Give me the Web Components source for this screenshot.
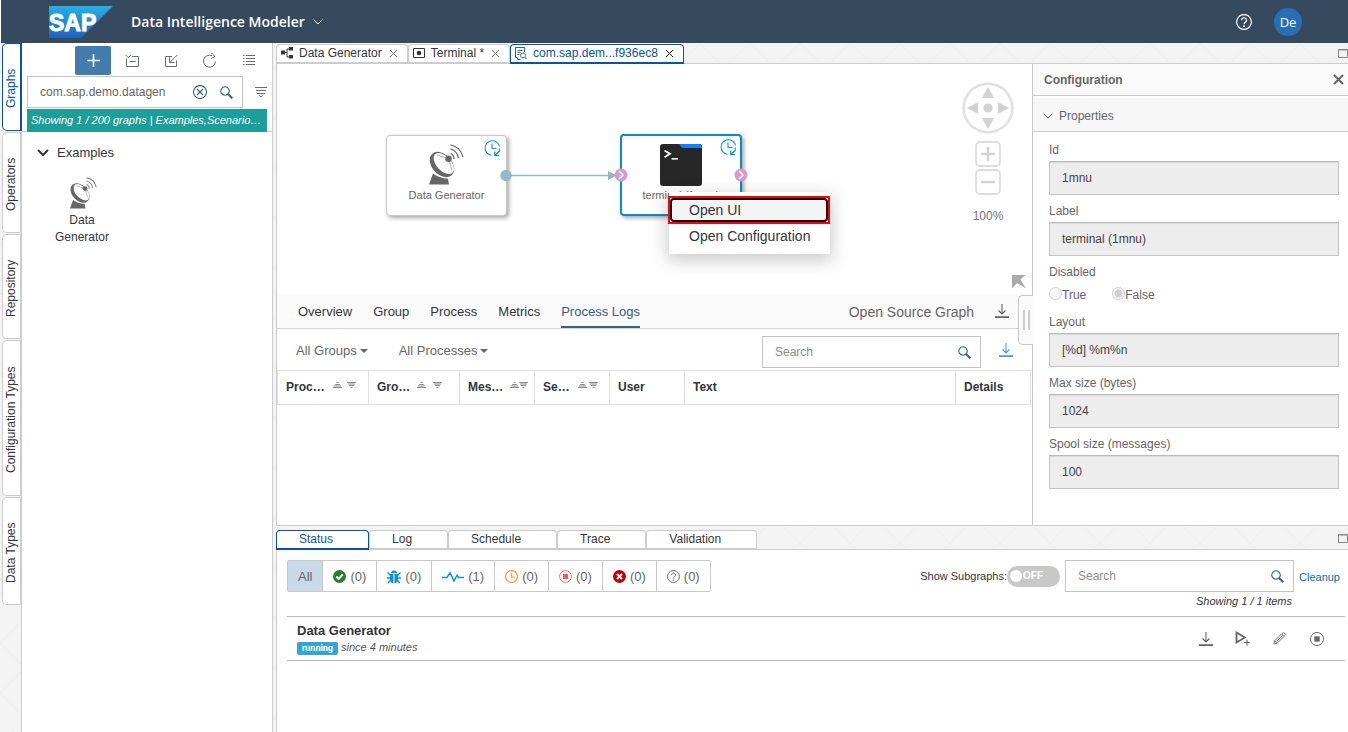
<!DOCTYPE html>
<html lang="en">
<head>
<meta charset="utf-8">
<meta name="viewport" content="width=device-width, initial-scale=1">
<title>Data Intelligence Modeler</title>
<style>
  html, body { height: 100%; margin: 0; }
  body { font: 12px/16px "Liberation Sans", Arial, sans-serif; color: #32363a; background: #fff; }
</style>
</head>
<body>
<modeler-app></modeler-app>

<script>
const BASE = `
  *, *::before, *::after { box-sizing: border-box; }
  :host { display: block; box-sizing: border-box; }
  :host([hidden]) { display: none; }
  button { font: inherit; color: inherit; background: none; border: 0; padding: 0; margin: 0; cursor: pointer;
           display: inline-flex; align-items: center; justify-content: center; }
  input, select { font: inherit; color: inherit; margin: 0; }
`;

/* Registers an element whose shadow root is cloned from one template. */
function define(tag, css, html, ready) {
  const template = document.createElement('template');
  template.innerHTML = `<style>${BASE}${css}</style>${html}`;
  customElements.define(tag, class extends HTMLElement {
    constructor() {
      super();
      this.attachShadow({ mode: 'open' }).append(template.content.cloneNode(true));
    }
    connectedCallback() { if (ready) ready.call(this, this.shadowRoot); }
  });
}

/* ---------- icons: [width, height, markup] ---------- */
const line = (d, w = 1) => `<path d="${d}" fill="none" stroke="currentColor" stroke-width="${w}"/>`;
const ICONS = {
  chevron: [10, 6, line('M.5 .5 5 5 9.500 .5', 1)],
  chevronBold: [12, 8, line('M1 1 6 6 11 1', 2)],
  help: [16, 16, line('M8 .7a7.300 7.300 0 1 0 .01 0zM5.600 6.200a2.400 2.400 0 1 1 3.700 2C8.400 8.800 8 9.200 8 10.200', 1.2) + '<circle cx="8" cy="12.200" r=".9" fill="currentColor"/>'],
  plus: [13, 13, line('M6.500 0V13M0 6.500H13', 1.6)],
  collapse: [14, 14, line('M7 2.500H13.500V12.500H1.500V4.500M4.500 7.500H10.500M.5 .8 3.500 3.800 6 .8', 1)],
  importBox: [14, 14, line('M8 2.500H1.500V12.500H12.500V6.500M13.500 .8 6 8.300M5.500 3.500V8.500H10.500', 1)],
  refresh: [14, 15, line('M12.500 8.500A6 6 0 1 1 9 2.700M8.500 0 12 3.500 8 5.500', 1)],
  list: [12, 13, line('M3 1.500H12M3 4.500H12M3 7.500H12M3 10.500H12M0 1.500H1.500M0 4.500H1.500M0 7.500H1.500M0 10.500H1.500', 1)],
  clear: [14, 14, line('M7 .6a6.400 6.400 0 1 0 .01 0zM4 4 10 10M10 4 4 10', 1.1)],
  search: [13, 13, line('M5 .8a4.200 4.200 0 1 0 .01 0z', 1.1) + line('M8.200 8.200 12.300 12.300', 2)],
  filter: [12, 12, line('M0 1.500H12M1 4.500H11M2 7.500H10M4.200 9.200 6 11 7.800 9.200', 1)],
  dish: [35, 41, '<g fill="#666"><path d="M4 29.500Q10 34 19 34.800L20 40.500H0Z"/><ellipse cx="13" cy="20.500" rx="14.500" ry="10" transform="rotate(47 13 20.500)"/></g><ellipse cx="14.800" cy="19.500" rx="12.700" ry="7.300" transform="rotate(47 14.800 19.500)" fill="#fff"/><path d="M8 11 19 14.500 23 26" fill="none" stroke="#777" stroke-width=".6"/><circle cx="19.500" cy="14.800" r="3.200" fill="#666"/><path d="M22 9.300A7 7 0 0 1 25 15M21.500 4.800A12 12 0 0 1 29.500 14M21.500 .8A16 16 0 0 1 34 13" fill="none" stroke="#777" stroke-width="1.300"/>'],
  terminal: [42, 42, '<rect width="42" height="42" rx="3" fill="#272727"/><path d="M19 0H39a3 3 0 0 1 3 3V4H24Q21 4 20.500 2Q20 0 19 0Z" fill="#0a84ff"/><path d="M4.500 6.500 10 9.800 4.500 13.200" fill="none" stroke="#fff" stroke-width="1.800"/><path d="M11.500 14.800H18" stroke="#fff" stroke-width="1.600"/>'],
  clockNode: [17, 17, line('M15.500 6.500A7.300 7.300 0 1 0 7.500 15.300M8 3.500V8.500H12.500M15.500 8.500 15 10', 1.1) + line('M16 10.500 11 15.500M10.800 11.500V15.700H15', 1.3)],
  graph: [12, 12, '<path d="M0 3.500H4V7.500H0zM8 0H12V3.500H8zM8 8H12V11.500H8z" fill="currentColor"/>' + line('M4 5.500H6M8 2H6V10H8', 1)],
  terminalTab: [12, 10, line('M.5 .5H11.500V9.500H.5z', 1) + '<circle cx="6" cy="5" r="2.300" fill="currentColor"/>'],
  docSearch: [12, 13, line('M5.500 12.500H2.500V10.500M.5 10.500V.5H9.500V5M.5 10.500H2.500M2.500 3.500H7.500M2.500 5.500H5.500M2.500 7.500H4.500M8 6a2.400 2.400 0 1 0 .01 0zM9.700 10 11.700 12.200', .9)],
  close: [9, 9, line('M1 1 8 8M8 1 1 8', 1)],
  closeBold: [11, 11, line('M1 1 10 10M10 1 1 10', 2)],
  square: [10, 9, line('M.5 .5H9.500V8.500H.5zM0 1H10', 1)],
  download: [14, 14, line('M7 0V10M3.500 6.500 7 10 10.500 6.500', 1.1) + '<path d="M0 12.200H14V14H0z" fill="currentColor"/>'],
  caret: [8, 4, '<path d="M0 0H8L4 4z" fill="currentColor"/>'],
  sortUp: [9, 6, line('M3.500 .5H5.500M2.200 2.500H6.800M1 4H8M0 5.500H9', 1)],
  sortDown: [9, 6, line('M0 .5H9M1 2H8M2 3.500H7M3.500 5.500H5.500', 1)],
  wheel: [52, 52, '<circle cx="26" cy="26" r="24.300" fill="none" stroke="#e0e0e0" stroke-width="2.600"/><g fill="#d2d2d2"><circle cx="26" cy="26" r="4.600"/><path d="M26 5 32 16H20zM26 47 32 36H20zM5 26 16 20V32zM47 26 36 20V32z"/></g>'],
  zoomIn: [26, 26, '<rect x="1" y="1" width="24" height="24" rx="4" fill="#fff" stroke="#ddd" stroke-width="1.800"/><path d="M13 6V20M6 13H20" stroke="#d2d2d2" stroke-width="2.400"/>'],
  zoomOut: [26, 26, '<rect x="1" y="1" width="24" height="24" rx="4" fill="#fff" stroke="#ddd" stroke-width="1.800"/><path d="M6 13H20" stroke="#d2d2d2" stroke-width="2.400"/>'],
  corner: [14, 14, '<path d="M0 0H13.500L8.500 4.500 14 13.500 5 8 0 13.500z" fill="#aaa"/>'],
  check: [13, 13, '<circle cx="6.500" cy="6.500" r="6.500" fill="#2b7d2b"/><path d="M3.300 6.500 5.700 9 9.700 4.300" fill="none" stroke="#fff" stroke-width="2"/>'],
  bug: [14, 14, '<g fill="#0a94d6"><path d="M4 3.200a3 2.800 0 0 1 6 0zM3 4H6.500V13.500Q3 12.500 3 9zM7.500 4H11V9Q11 12.500 7.500 13.500z"/></g><path d="M.5 2.500 3.500 5.500M13.500 2.500 10.500 5.500M0 8H4M14 8H10M1 13 4 10M13 13 10 10" stroke="#0a94d6" stroke-width="1.400" fill="none"/>'],
  pulse: [22, 10, '<path d="M0 5.500H5L8 .8 12 9 15 3.500 16.500 5.500H22" fill="none" stroke="#0a94d6" stroke-width="1.500"/>'],
  clock: [13, 13, '<path d="M6.500 .6a5.900 5.900 0 1 0 .01 0zM6.500 3V7H10" fill="none" stroke="#e9a13b" stroke-width="1.200"/>'],
  stopRed: [13, 13, '<circle cx="6.500" cy="6.500" r="5.900" fill="none" stroke="#ff6a6a"/><rect x="4" y="4" width="5" height="5" fill="#ff5555"/>'],
  error: [13, 13, '<circle cx="6.500" cy="6.500" r="6.500" fill="#b00"/><path d="M4 4 9 9M9 4 4 9" stroke="#fff" stroke-width="2"/>'],
  playAdd: [15, 15, line('M1.500 1.500V11.500L9.800 6.500z', 1.8) + line('M9 11.500H15M12 8.500V14.500', 1.1)],
  pencil: [13, 13, line('M1 12 1.800 8.800 9 1.500Q10.500 0 11.800 1.200T11.500 4L4.200 11.200zM2 8.800 4.200 11M8.500 2 11 4.500M3.800 9.200 9.800 3.300', .9)],
  stop: [14, 14, line('M7 .5a6.500 6.500 0 1 0 .01 0z', 1) + '<rect x="4.300" y="4.300" width="5.400" height="5.400" fill="currentColor"/>'],
};
customElements.define('di-icon', class extends HTMLElement {
  constructor() { super(); this.attachShadow({ mode: 'open' }); }
  connectedCallback() {
    const [w, h, body] = ICONS[this.getAttribute('name')];
    const width = +(this.getAttribute('width') || w);
    this.shadowRoot.innerHTML = `<style>:host{display:inline-flex;flex:none}svg{display:block}</style>
      <svg width="${width}" height="${Math.round(h * width / w)}" viewBox="0 0 ${w} ${h}" aria-hidden="true">${body}</svg>`;
  }
});

/* ---------- search box ---------- */
define('search-box', `
  form { display: flex; align-items: center; height: 32px; margin: 0; border: 1px solid #c4c4c4; background: #fff; padding: 0 9px 0 12px; }
  input { flex: 1; min-width: 0; border: 0; outline: 0; padding: 0; background: none; height: 28px; color: #666; }
  input::placeholder { color: #8f8f8f; opacity: 1; }
  button { width: 26px; height: 28px; flex: none; color: #346187; }
  button:last-child { margin-right: -6px; }
`, `<form role="search"><input type="text" placeholder="Search" aria-label="Search">
    <button type="button" class="clear" aria-label="Clear"><di-icon name="clear"></di-icon></button>
    <button type="button" aria-label="Search"><di-icon name="search"></di-icon></button></form>`,
function (root) {
  const input = root.querySelector('input'), clear = root.querySelector('.clear');
  input.value = this.getAttribute('value') || '';
  if (!input.value) clear.remove();
  clear.addEventListener('click', () => { input.value = ''; });
});

/* ---------- shell header ---------- */
define('shell-header', `
  :host { background: #354a5f; color: #fff; margin-left: 1px; }
  header { display: flex; align-items: center; height: 43px; padding: 0 46px 0 48px; }
  .logo { display: block; flex: none; margin-right: 18px; }
  .title { font: 600 14px/20px "Open Sans", "Noto Sans", sans-serif; gap: 8px; margin: 0; }
  .spacer { flex: 1; }
  .avatar { width: 28px; height: 28px; border-radius: 50%; background: #286eb4; font: 13px/18px "Open Sans", sans-serif; margin-left: 22px; }
`, `<header>
  <svg class="logo" width="64" height="32" viewBox="0 0 64 32" role="img" aria-label="SAP logo">
    <defs><linearGradient id="g" x1="0" y1="0" x2="0" y2="1"><stop offset="0" stop-color="#27b0e6"/><stop offset="1" stop-color="#1d62ba"/></linearGradient></defs>
    <path d="M0 0H64L32 32H0z" fill="url(#g)"/>
    <text x="0" y="25" font-family="Liberation Sans" font-size="23" font-weight="700" fill="#fff" stroke="#fff" stroke-width="1">SAP</text>
  </svg>
  <button class="title">Data Intelligence Modeler <di-icon name="chevron"></di-icon></button>
  <span class="spacer"></span>
  <button aria-label="Help"><di-icon name="help"></di-icon></button>
  <button class="avatar" aria-label="User menu">De</button>
</header>`);

/* ---------- vertical rail ---------- */
define('rail-tab', `
  :host { padding-left: 2px; }
  button { writing-mode: vertical-rl; transform: rotate(180deg); width: 20px; padding: 20px 0 23px 2px;
    border: 1px solid #ccc; border-left: 2px solid #ccc; border-radius: 0 5px 5px 0; background: #fff; line-height: 16px; height: var(--tab-height, auto); }
  :host([selected]) button { border-color: #0854a0; color: #0854a0; }
`, `<button role="tab"><slot></slot></button>`);

define('side-rail', `
  :host { border-right: 1px solid #ccc; }
  nav { display: flex; flex-direction: column; gap: 1px; width: 21px; }
`, `<nav role="tablist" aria-label="Explorer">
  <rail-tab selected style="--tab-height:88px">Graphs</rail-tab>
  <rail-tab style="--tab-height:101px">Operators</rail-tab>
  <rail-tab style="--tab-height:105px">Repository</rail-tab>
  <rail-tab style="--tab-height:156px">Configuration Types</rail-tab>
  <rail-tab style="--tab-height:108px">Data Types</rail-tab>
</nav>`);

/* ---------- graph explorer ---------- */
define('graph-explorer', `
  :host { background: #fff; border-right: 1px solid #ccc; min-width: 0; }
  .tools { display: flex; padding: 3px 0 1px 53px; color: #6a6d70; }
  .tools button { width: 39px; height: 29px; }
  .tools .add { width: 36px; margin-right: 1px; background: #427cac; color: #fff; border-radius: 2px; }
  .find { display: flex; align-items: center; padding: 0 5px; }
  search-box { flex: 1; min-width: 0; }
  .find > button { width: 24px; height: 32px; justify-content: end; color: #6a6d70; }
  .head { border-bottom: 1px solid #ccc; height: 89px; }
  .note { margin: 1px 5px 0; padding: 0 4px; height: 23px; font-size: 11px; line-height: 22px; font-style: italic; color: #fff; background: #1e9e98; white-space: nowrap; overflow: hidden; }
  h2 { margin: 0; font-size: 13px; font-weight: 400; }
  .group { gap: 8px; padding: 12px 15px; line-height: 18px; }
  .item { display: flex; flex-direction: column; width: 70px; margin: 2px 0 0 25px; line-height: 17px; gap: 3px; padding-top: 1px; }
  .item di-icon { margin-left: 3px; }
`, `<section aria-label="Graphs">
  <div class="head">
    <div class="tools">
      <button class="add" aria-label="Create graph"><di-icon name="plus"></di-icon></button>
      <button aria-label="Collapse"><di-icon name="collapse"></di-icon></button>
      <button aria-label="Import"><di-icon name="importBox"></di-icon></button>
      <button aria-label="Refresh"><di-icon name="refresh"></di-icon></button>
      <button aria-label="List view"><di-icon name="list"></di-icon></button>
    </div>
    <div class="find"><search-box value="com.sap.demo.datagen"></search-box>
      <button aria-label="Filter"><di-icon name="filter"></di-icon></button></div>
    <div class="note">Showing 1 / 200 graphs | Examples,Scenario…</div>
  </div>
  <h2><button class="group" aria-expanded="true"><di-icon name="chevronBold"></di-icon>Examples</button></h2>
  <button class="item"><di-icon name="dish" width="27"></di-icon><span>Data Generator</span></button>
</section>`);

/* ---------- editor tabs ---------- */
define('editor-tab', `
  :host { display: flex; align-items: center; height: 20px; padding: 0 9px 1px 4px; border: 1px solid #ccc; border-bottom: 2px solid #ccc;
    border-radius: 4px 4px 0 0; background: #fff; color: #32363a; white-space: nowrap; margin-bottom: -1px; }
  :host([selected]) { border-color: #0854a0; color: #0854a0; border-radius: 4px 4px 0 0; }
  .label { gap: 6px; line-height: 15px; }
  .close { margin-left: 7px; color: #777; }
  :host([selected]) .close { color: #111; }
`, `<button class="label" role="tab"><slot name="icon"></slot><slot></slot></button>
<button class="close" aria-label="Close"><di-icon name="close"></di-icon></button>`);

define('editor-tabs', `
  :host { display: flex; align-items: end; height: 21px; border-bottom: 1px solid #ccc; }
  div { display: flex; }
  .spacer { flex: 1; }
  .max { color: #888; align-self: center; }
`, `<div role="tablist" aria-label="Open graphs">
  <editor-tab><di-icon slot="icon" name="graph"></di-icon>Data Generator</editor-tab>
  <editor-tab><di-icon slot="icon" name="terminalTab"></di-icon>Terminal *</editor-tab>
  <editor-tab selected><di-icon slot="icon" name="docSearch"></di-icon>com.sap.dem...f936ec8</editor-tab>
</div><span class="spacer"></span><button class="max" aria-label="Maximize"><di-icon name="square"></di-icon></button>`);

/* ---------- canvas ---------- */
define('graph-node', `
  :host { width: 121px; height: 81px; border: 1px solid #c8c8c8; border-radius: 4px; background: #fff; padding-top: 8px;
    box-shadow: 2px 2px 4px rgba(0,0,0,.35); text-align: center; font-size: 11px; color: #666; }
  :host([selected]) { width: 122px; height: 82px; border: 2px solid #0a8acb; }
  .icon { display: flex; justify-content: center; height: 42px; }
  .label { line-height: 18px; }
  .state { position: absolute; top: 4px; right: 5px; color: #0a94d6; }
  :host([selected]) .state { top: 3px; right: 3px; }
`, `<div class="icon"><slot name="icon"></slot></div><div class="label"><slot></slot></div>
<di-icon class="state" name="clockNode"></di-icon>`);

define('context-menu', `
  :host { background: #fff; width: 161px; padding: 4px 0 5px; box-shadow: 0 5px 16px 2px rgba(0,0,0,.2); font-size: 14px; }
  button { display: flex; width: 100%; justify-content: start; padding-left: 20px; height: 24px; line-height: 18px; }
  .frame { margin-left: -1px; width: 162px; height: 28px; border: 2px solid #f00; background: #fff; }
  .frame button { padding-left: 17px; border: 2px solid #111; border-radius: 4px; background: #f3f3f3; }
  .second { margin-bottom: 1px; }
`, `<div role="menu"><div class="frame"><button role="menuitem">Open UI</button></div>
<button class="second" role="menuitem">Open Configuration</button></div>`);

define('graph-canvas', `
  :host { position: relative; height: 230px; background: #fff; overflow: hidden; }
  graph-node, context-menu, .edges, .nav { position: absolute; }
  .edges { left: 0; top: 0; }
  .nav { right: 17px; top: 18px; width: 54px; display: flex; flex-direction: column; align-items: center; color: #777; }
  .nav button { display: flex; }
  .zoom { margin: 7px 0 3px; display: flex; flex-direction: column; gap: 2px; }
  .fit { position: absolute; right: 6px; bottom: 5px; }
  .level { margin-top: 9px; line-height: 18px; }
`, `
<graph-node style="left:109px;top:71px"><di-icon slot="icon" name="dish"></di-icon>Data Generator</graph-node>
<graph-node selected style="left:343px;top:70px"><di-icon slot="icon" name="terminal"></di-icon>terminal (1mnu)</graph-node>
<svg class="edges" width="480" height="160" aria-hidden="true">
  <path d="M229 111.500H334" stroke="#94b9c8" stroke-width="1.400"/><path d="M331 107 339.500 111.500 331 116z" fill="#8fb5c4"/>
  <circle cx="229" cy="111.500" r="5.700" fill="#94b9c8"/>
  <g fill="#d999cd"><circle cx="344" cy="111" r="6.500"/><circle cx="464" cy="111" r="6.500"/></g>
  <path d="M342 107 346 111 342 115M462 107 466 111 462 115" fill="none" stroke="#fff" stroke-width="1.500"/>
</svg>
<div class="nav">
  <button aria-label="Pan"><di-icon name="wheel"></di-icon></button>
  <div class="zoom"><button aria-label="Zoom in"><di-icon name="zoomIn"></di-icon></button>
  <button aria-label="Zoom out"><di-icon name="zoomOut"></di-icon></button></div>
  <span class="level">100%</span>
</div>
<button class="fit" aria-label="Show overview"><di-icon name="corner"></di-icon></button>
<context-menu style="left:392px;top:128px"></context-menu>`);

/* ---------- process logs ---------- */
define('process-logs', `
  .tabs { display: flex; align-items: stretch; height: 35px; padding: 0 23px 0 21px; gap: 21px; background: #fafafa; border-bottom: 1px solid #d4d4d4; font-size: 13px; }
  .tabs [role=tab] { border-bottom: 2px solid transparent; padding-top: 4px; }
  .tabs [aria-selected=true] { color: #346187; border-color: #346187; }
  .open { margin-left: auto; font-size: 14px; color: #666; padding-top: 2px; }
  .dl { color: #666; }
  .filters { display: flex; align-items: center; padding: 7px 19px 2px 19px; gap: 31px; color: #666; font-size: 13px; }
  .pick { display: inline-grid; align-items: center; grid-template-columns: auto 8px; column-gap: 3px; }
  .pick select { appearance: none; border: 0; background: none; padding: 0 11px 0 0; grid-area: 1 / 1 / 2 / 3; field-sizing: content; height: 24px; margin-top: -2px; }
  .pick di-icon { grid-area: 1 / 2; pointer-events: none; margin-bottom: 2px; }
  .filters search-box { width: 219px; margin-left: auto; font-size: 12px; }
  .filters .blue { color: #4e9fd0; margin: 0 0 4px -13px; }
  .grid { padding-right: 1px; }
  table { width: 100%; border-collapse: collapse; table-layout: fixed; }
  th { height: 34px; padding: 0 8px 1px; text-align: left; font-weight: 700; border: 1px solid #e0e0e0; white-space: nowrap; }
  th > span { display: flex; align-items: center; gap: var(--gap, 4px); }
  th di-icon { color: #8a8a8a; margin-bottom: 4px; }
`, `
<div class="tabs">
  <button role="tab">Overview</button><button role="tab">Group</button><button role="tab">Process</button><button role="tab">Metrics</button>
  <button role="tab" aria-selected="true">Process Logs</button>
  <button class="open">Open Source Graph</button><button class="dl" aria-label="Download"><di-icon name="download"></di-icon></button>
</div>
<div class="filters">
  <span class="pick"><select aria-label="Groups"><option>All Groups</option></select><di-icon name="caret"></di-icon></span>
  <span class="pick"><select aria-label="Processes"><option>All Processes</option></select><di-icon name="caret"></di-icon></span>
  <search-box></search-box>
  <button class="blue" aria-label="Download logs"><di-icon name="download"></di-icon></button>
</div>
<div class="grid"><table>
  <colgroup><col style="width:91px"><col style="width:91px"><col style="width:75px"><col style="width:75px"><col style="width:75px"><col><col style="width:75px"></colgroup>
  <thead><tr>
    <th><span style="--gap:5px">Proc…&nbsp;<di-icon name="sortUp"></di-icon><di-icon name="sortDown"></di-icon></span></th>
    <th><span style="--gap:7px">Gro…<di-icon name="sortUp"></di-icon><di-icon name="sortDown"></di-icon></span></th>
    <th><span style="--gap:0px">Mes…&nbsp;&nbsp;<di-icon name="sortUp"></di-icon><di-icon name="sortDown"></di-icon></span></th>
    <th><span style="--gap:2px">Se…&nbsp;&nbsp;<di-icon name="sortUp"></di-icon><di-icon name="sortDown"></di-icon></span></th>
    <th>User</th><th>Text</th><th>Details</th>
  </tr></thead><tbody></tbody>
</table></div>`);

/* ---------- configuration panel ---------- */
define('config-field', `
  :host { margin-bottom: 7px; }
  label { display: block; line-height: 18px; margin-bottom: 2px; }
  input { display: block; width: 100%; height: 34px; padding: 0 12px; border: 1px solid #c4c4c4; border-top-color: #bbb; border-radius: 0; background: #ededed; color: #444; outline: 0; box-shadow: inset 0 1px 1px rgba(0,0,0,.08); }
`, `<label for="field"></label><input id="field" type="text" readonly>`,
function (root) {
  root.querySelector('label').textContent = this.getAttribute('label');
  root.querySelector('input').value = this.getAttribute('value');
});

define('config-panel', `
  :host { position: relative; background: #fff; border-left: 1px solid #c8c8c8; color: #666; }
  header { display: flex; align-items: center; justify-content: space-between; height: 32px; padding: 0 4px 0 11px; background: #fafafa; border-bottom: 1px solid #ccc; }
  h2 { margin: 0; font-size: 12px; line-height: 16px; }
  .section { display: flex; width: 100%; justify-content: start; gap: 6px; margin-top: 2px; height: 34px; padding: 3px 0 0 10px; background: #f7f7f7; border-bottom: 1px solid #ccc; }
  .body { padding: 9px 9px 0 16px; }
  fieldset { border: 0; padding: 0; margin: 0 0 7px; min-width: 0; }
  legend { padding: 0; line-height: 18px; margin-bottom: 2px; }
  .options { display: flex; gap: 26px; height: 23px; padding-top: 3px; }
  .options label { display: flex; line-height: 18px; }
  .options input { width: 13px; height: 13px; margin-top: 1px; }
  .grip { position: absolute; left: -15px; top: 231px; width: 15px; height: 50px; gap: 3px; border: 1px solid #c8c8c8; border-right: 0; border-radius: 5px 0 0 5px; background: #fafafa; }
  .grip i { width: 2px; height: 20px; background: #ccc; }
`, `
<header><h2>Configuration</h2><button aria-label="Close"><di-icon name="closeBold"></di-icon></button></header>
<button class="section" aria-expanded="true"><di-icon name="chevron"></di-icon>Properties</button>
<div class="body">
  <config-field label="Id" value="1mnu"></config-field>
  <config-field label="Label" value="terminal (1mnu)"></config-field>
  <fieldset><legend>Disabled</legend><div class="options">
    <label><input type="radio" name="disabled" disabled>True</label>
    <label><input type="radio" name="disabled" checked disabled>False</label></div></fieldset>
  <config-field label="Layout" value="[%d] %m%n"></config-field>
  <config-field label="Max size (bytes)" value="1024"></config-field>
  <config-field label="Spool size (messages)" value="100"></config-field>
</div>
<button class="grip" aria-label="Resize panel"><i></i><i></i></button>`);

/* ---------- status dock ---------- */
define('status-dock', `
  :host { display: flex; flex-direction: column; }
  .bar { display: flex; align-items: end; height: 24px; border-bottom: 1px solid #ccc; }
  .bar [role=tab] { height: 20px; padding: 0 35px 1px 22px; border: 1px solid #ccc; border-bottom: 2px solid #ccc; border-radius: 4px 4px 0 0; background: #fff; margin-bottom: -1px; line-height: 16px; }
  .bar [aria-selected=true] { border-color: #0854a0; color: #0854a0; }
  .max { margin-left: auto; align-self: center; color: #888; padding-top: 2px; }
  .content { flex: 1; background: #fff; border-left: 1px solid #ccc; padding: 10px 3px 0 10px; }
  .controls { display: flex; align-items: center; padding-right: 5px; }
  .states { display: flex; border: 1px solid #c8c8c8; border-radius: 2px; height: 32px; font-size: 13px; color: #666; }
  .states button { padding: 1px 10px 0; gap: 4px; border-left: 1px solid #c8c8c8; }
  .states button:first-child { border-left: 0; background: #c8daea; }
  .sub { margin-left: auto; font-size: 11px; line-height: 14px; display: flex; align-items: center; }
  .sub > span:first-child { margin-bottom: 1px; }
  .toggle { display: flex; align-items: center; width: 53px; height: 21px; padding-left: 2px; border-radius: 11px; background: #c8c8c8; color: #fff; font-weight: 700; font-size: 10px; }
  .toggle input { appearance: none; width: 12px; height: 12px; margin: 0 1px; border-radius: 50%; background: #fff; }
  .controls search-box { width: 229px; margin: 0 5px; }
  a { color: #0a6eb4; font-size: 11px; text-decoration: none; margin-top: 2px; }
  .count { text-align: right; font-size: 11px; font-style: italic; line-height: 18px; padding: 0 53px 6px 0; }
  .row { display: flex; align-items: center; height: 45px; border: 1px solid #bbb; border-width: 1px 0; padding: 0 10px; }
  .row > div { flex: 1; }
  .row h3 { margin: 0; font-size: 13px; line-height: 18px; }
  .meta { display: flex; align-items: center; gap: 3px; font-size: 11px; line-height: 15px; font-style: italic; color: #555; }
  .badge { font: 700 9px/13px Roboto, sans-serif; color: #fff; background: #31a5da; border-radius: 2px; padding: 0 5px; margin-top: 1px; }
  .row button { width: 37px; height: 32px; color: #666; }
`, `
<div class="bar">
  <button role="tab" aria-selected="true">Status</button><button role="tab">Log</button><button role="tab">Schedule</button><button role="tab">Trace</button><button role="tab">Validation</button>
  <button class="max" aria-label="Maximize"><di-icon name="square"></di-icon></button>
</div>
<div class="content">
  <div class="controls">
    <div class="states">
      <button>All</button>
      <button><di-icon name="check"></di-icon>(0)</button>
      <button><di-icon name="bug"></di-icon>(0)</button>
      <button><di-icon name="pulse"></di-icon>(1)</button>
      <button><di-icon name="clock"></di-icon>(0)</button>
      <button><di-icon name="stopRed"></di-icon>(0)</button>
      <button><di-icon name="error"></di-icon>(0)</button>
      <button><di-icon name="help" width="13"></di-icon>(0)</button>
    </div>
    <label class="sub"><span>Show Subgraphs:</span><span class="toggle"><input type="checkbox" role="switch">OFF</span></label>
    <search-box></search-box>
    <a href="#cleanup">Cleanup</a>
  </div>
  <div class="count">Showing 1 / 1 items</div>
  <div class="row">
    <div><h3>Data Generator</h3><span class="meta"><span class="badge">running</span>since 4 minutes</span></div>
    <button aria-label="Download"><di-icon name="download"></di-icon></button>
    <button aria-label="Run as"><di-icon name="playAdd"></di-icon></button>
    <button aria-label="Edit"><di-icon name="pencil"></di-icon></button>
    <button aria-label="Stop"><di-icon name="stop"></di-icon></button>
  </div>
</div>`);

/* ---------- application frame ---------- */
define('modeler-app', `
  :host { display: flex; flex-direction: column; min-height: 100vh; }
  shell-header { flex: none; }
  .work { flex: 1; display: grid; grid-template-columns: 22px 251px 3px minmax(0, 1fr);
    background: linear-gradient(45deg, transparent 49%, #eee 50%, transparent 51%) 0 0 / 50px 50px,
                linear-gradient(-45deg, transparent 49%, #eee 50%, transparent 51%) 0 0 / 50px 50px, #f3f3f3; }
  main { grid-column: 4; display: grid; grid-template-rows: minmax(483px, 1fr) minmax(206px, auto); min-width: 0; }
  .editor { display: flex; flex-direction: column; min-width: 0; }
  .split { flex: 1; display: grid; grid-template-columns: minmax(0, 1fr) 316px; border: 1px solid #ccc; border-width: 0 0 1px 1px; background: #fff; }
`, `
<shell-header></shell-header>
<div class="work">
  <side-rail></side-rail>
  <graph-explorer></graph-explorer>
  <main>
    <div class="editor">
      <editor-tabs></editor-tabs>
      <div class="split">
        <div><graph-canvas></graph-canvas><process-logs></process-logs></div>
        <config-panel></config-panel>
      </div>
    </div>
    <status-dock></status-dock>
  </main>
</div>`);
</script>
</body>
</html>
